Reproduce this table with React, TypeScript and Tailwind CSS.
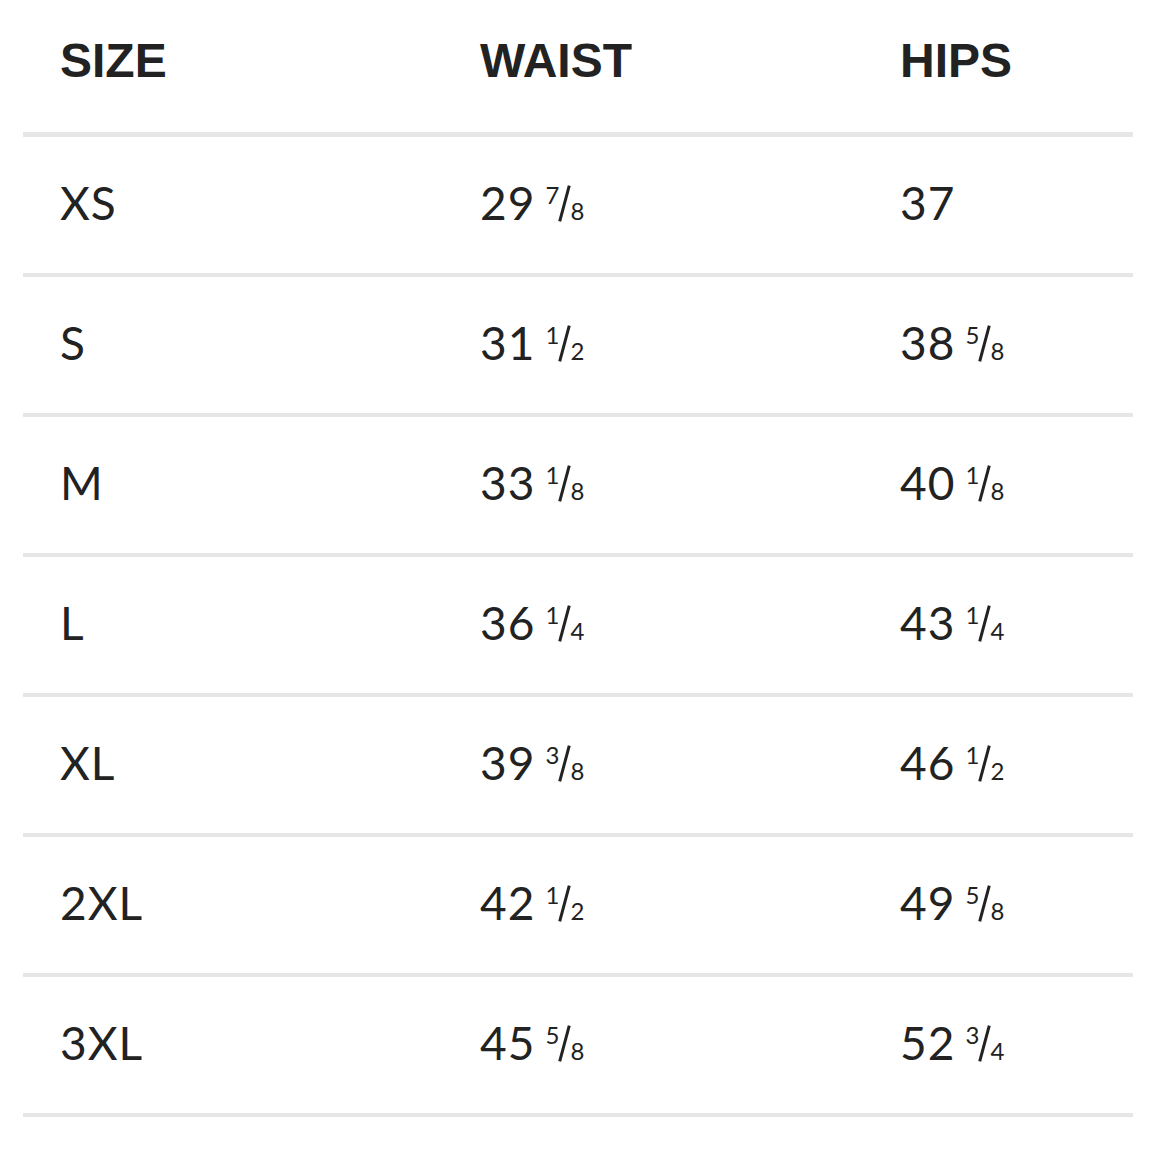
import React from "react";

type Val = { whole: string; num?: string; den?: string };

const v = (whole: string, num?: string, den?: string): Val => ({ whole, num, den });

const rows: [string, Val, Val][] = [
  ["XS", v("29", "7", "8"), v("37")],
  ["S", v("31", "1", "2"), v("38", "5", "8")],
  ["M", v("33", "1", "8"), v("40", "1", "8")],
  ["L", v("36", "1", "4"), v("43", "1", "4")],
  ["XL", v("39", "3", "8"), v("46", "1", "2")],
  ["2XL", v("42", "1", "2"), v("49", "5", "8")],
  ["3XL", v("45", "5", "8"), v("52", "3", "4")],
];

function Fraction({ num, den }: { num: string; den: string }) {
  return (
    <span className="inline-block relative w-[39px] h-[33px] ml-[10px] align-baseline tracking-normal">
      <span className="absolute left-[0px] top-[-4px] text-[24px] leading-none">{num}</span>
      <span className="absolute left-[18px] top-[-2px] w-[2.5px] h-[37px] bg-[#222222] rotate-[15deg]" />
      <span className="absolute right-[0px] bottom-[-3px] text-[24px] leading-none">{den}</span>
    </span>
  );
}

function Value({ val }: { val: Val }) {
  return (
    <div>
      <span>{val.whole}</span>
      {val.num && val.den ? <Fraction num={val.num} den={val.den} /> : null}
    </div>
  );
}

export default function App() {
  return (
    <div className="w-[1162px] h-[1161px] bg-white text-[#222222]">
      <div className="mx-[23px] w-[1110px]">
        <div className="grid grid-cols-[420px_420px_1fr] pl-[37px] h-[137px] items-center pb-[11px] border-b-[5px] border-[#e6e6e6] font-['Liberation_Sans',Arial,sans-serif] font-bold text-[48px] leading-none">
          <div>SIZE</div>
          <div>WAIST</div>
          <div>HIPS</div>
        </div>
        {rows.map((r) => (
          <div
            key={r[0]}
            className="grid grid-cols-[420px_420px_1fr] pl-[37px] h-[140px] items-center pb-[4px] border-b-[4px] border-[#e6e6e6] font-['Lato',sans-serif] text-[46px] tracking-[1px] leading-none"
          >
            <div>{r[0]}</div>
            <Value val={r[1]} />
            <Value val={r[2]} />
          </div>
        ))}
      </div>
    </div>
  );
}
